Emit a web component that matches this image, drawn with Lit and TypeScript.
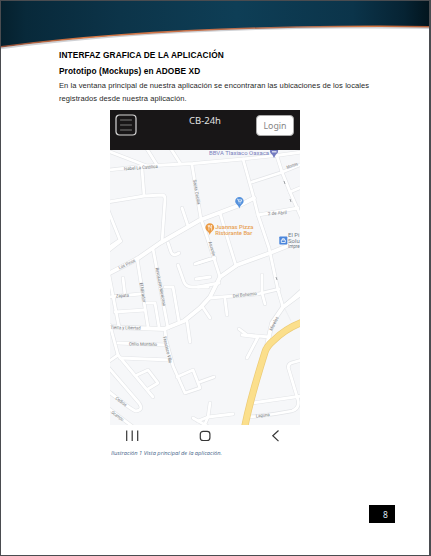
import { LitElement, html, svg, css } from "lit";
import { customElement } from "lit/decorators.js";

const ROADS = [
  "M108 170L145 166L193 163.500L243 159L280 155L302 152",
  "M108 151L147 166", "M147 149L157 165", "M171 149L180 163",
  "M142 169L144 195", "M108 202L144 196L162 195Q165 195 165 199L162 242",
  "M192 165L201 219L209 243L220 277", "M182 208L188 226",
  "M108 210L120 240L108 248", "M168 243L171 252Q173 257 179 253",
  "M243 159L253 195L258 215L269 248L278 290L283 307",
  "M275 150L282 172L290 192L302 219", "M252 182L280 173L302 164", "M290 192L302 187",
  "M258 215L298 208", "M220 213L228 240L236 266",
  "M198 263L215 258", "M198 287L219 283", "M210 298L258 294L279 289",
  "M262 275L262 293L265 304", "M225 299L227 315", "M202 306L210 318",
  "M283 307L302 290", "M239 329L247 335L269 337",
  "M137 258L148 327", "M153 249L168 328", "M165 287L173 287L179 322",
  "M147 303L155 303L159 327", "M123 278L125 295", "M108 297L140 294",
  "M108 270L119 327", "M115 312L145 310", "M178 265L184 282Q186 287 192 287L208 287",
  "M196 279L210 277", "M195 264L210 259", "M108 251L121 241",
  "M165 330L166 340L173 366L185 393L200 388L193 370L177 377",
  "M187 321L190 342",
  "M110 325L118 355L153 397", "M118 343L166 345", "M120 358L170 360", "M108 362L118 355",
  "M137 375L148 370L158 383L148 389", "M108 367L139 403Q144 410 136 411Q133 411 108 391",
  "M108 408L132 426", "M200 382L214 377", "M193 418L207 426",
  "M210 403L208 417L204 426", "M198 421L208 417L233 414",
  "M242 335L258 337L247 358", "M252 403L302 396",
  "M302 360L291 363Q287 365 289 370L298 400Q300 408 292 411Q272 415 249 417",
];
const MAIN = [
  "M108 274L137 259L160 243L200 220L240 205L254 198",
  "M108 327L164 329L184 321L200 308L210 297L220 277L237 265L270 253L290 245",
  "M302 293L283 307L272 323L267 345",
];
const YELLOW = "M244.500 428C249 405 254 387 265 352Q267 346 273 341C282 332 292 326 303 322";

type Label = [string, number, number, number, number];
const LABELS: Label[] = [
  ["Isabel La Católica", 124, 170.3, -4, 34], ["Santa Cecilia", 193, 180, 80, 25],
  ["Montes", 287.3, 169, -20, 11.5], ["2 de Abril", 268, 215.3, -4, 19],
  ["Los Pinos", 119.500, 269.500, -26, 18], ["El Mirador", 139.500, 283, 80, 20],
  ["Revolución Mexicana", 155.500, 268, 79, 39], ["Zapata", 116, 297.5, -4, 13],
  ["Tierra y Libertad", 110.5, 329, 1, 30], ["Otilio Montaño", 129, 345.5, 1, 28],
  ["Francisco Villa", 163, 337, 77, 27], ["Del Bohemio", 233, 297.5, -6, 24],
  ["Morelos", 272, 331, -63, 15], ["Asunción", 208.500, 242, 74, 15],
  ["Laguna", 256, 417.5, -6, 14], ["Cedros", 115, 399, 36, 13], ["Ocampo", 111, 413, 36, 14],
];

@customElement("street-map")
class StreetMap extends LitElement {
  static styles = css`
    :host { display: block; height: 275px; }
    svg { display: block; width: 190px; height: 275px; }
    .edge, .road, .main-edge, .main, .gold-edge, .gold { fill: none; stroke-linejoin: round; stroke-linecap: round; }
    .edge { stroke: #e2e4e7; stroke-width: 4; }
    .main-edge { stroke: #e0e2e5; stroke-width: 5; }
    .road { stroke: #fff; stroke-width: 2.8; }
    .main { stroke: #fff; stroke-width: 3.8; }
    .gold-edge { stroke: #eccb76; stroke-width: 7.2; }
    .gold { stroke: #fbdf8c; stroke-width: 5.8; }
    text { font-family: Roboto, sans-serif; }
    .street { font-size: 4.6px; fill: #76797d; stroke: #f7f8f9; stroke-width: .7px; paint-order: stroke; }
    .blue { fill: #7a82bd; font-size: 6px; }
    .food { fill: #e8a052; font-size: 6px; font-weight: 500; }
    .shop { fill: #737b86; font-size: 6px; }
    .small { font-size: 4.8px; }
  `;
  render() {
    return html`<svg viewBox="110 150 190 275">
      <rect x="110" y="150" width="190" height="275" fill="#f6f7f9"></rect>
      ${ROADS.map((d) => svg`<path class="edge" d=${d}></path>`)}
      ${MAIN.map((d) => svg`<path class="main-edge" d=${d}></path>`)}
      ${ROADS.map((d) => svg`<path class="road" d=${d}></path>`)}
      ${MAIN.map((d) => svg`<path class="main" d=${d}></path>`)}
      <path d="M285 309L291 321" stroke="#e6e8eb" stroke-width=".6"></path>
      <path class="gold-edge" d=${YELLOW}></path>
      <path class="gold" d=${YELLOW}></path>
      ${LABELS.map(([t, x, y, a, w]) => svg`<text class="street" transform="translate(${x} ${y}) rotate(${a})" textLength=${w} lengthAdjust="spacingAndGlyphs">${t}</text>`)}
      <path d="M284 181l1 3M290 199l1 3M276 277l1 3" stroke="#9da0a4" stroke-width="1"></path>
      <text class="blue" x="209" y="155.300" textLength="60" lengthAdjust="spacingAndGlyphs">BBVA Tlaxiaco Oaxaca</text>
      <path d="M270 150h8.200q.3 3-2.500 4.800L274 158l-1.700-3.200Q269.500 153 270 150" fill="#747bc0"></path>
      <path d="M272 151h4.500v1.500H272z" fill="#d5d8ee"></path>
      <path d="M235.200 201.200a4.200 4.200 0 0 1 8.400 0c0 2.900-3.200 3.600-4.200 7.200c-1-3.600-4.200-4.300-4.200-7.200" fill="#5592dd"></path>
      <path d="M237.200 199.200h.8l.7 2.500h2.400l.7-1.800h-3.500" fill="none" stroke="#fff" stroke-width=".7"></path>
      <path d="M238.700 203h.7m1 0h.7" stroke="#fff" stroke-width=".8"></path>
      <path d="M205.400 227.600a4.400 4.400 0 0 1 8.800 0c0 3-3.300 3.700-4.400 7.300c-1.100-3.600-4.400-4.300-4.400-7.300" fill="#eb9a43"></path>
      <path d="M208.200 225v1.700h1.400V225m-.7 0v5.500M211.600 230.500V225q-1 .8-1 3h1" fill="none" stroke="#fff" stroke-width=".6"></path>
      <text class="food" x="215.300" y="228.500" textLength="38" lengthAdjust="spacingAndGlyphs">Juannas Pizza</text>
      <text class="food" x="215.300" y="235" textLength="37" lengthAdjust="spacingAndGlyphs">Ristorante Bar</text>
      <rect x="279.300" y="236.500" width="8" height="8" rx=".7" fill="#4b86dc"></rect>
      <path d="M281.300 240h4v2.500h-4zM282.300 240v-1.300h2v1.300" fill="none" stroke="#fff" stroke-width=".8"></path>
      <text class="shop" x="288" y="237" textLength="11.500" lengthAdjust="spacingAndGlyphs">El Pi</text>
      <text class="shop" x="288" y="243" textLength="11.700" lengthAdjust="spacingAndGlyphs">Solu</text>
      <text class="shop small" x="288" y="248.300" textLength="11.700" lengthAdjust="spacingAndGlyphs">Impre</text>
    </svg>`;
  }
}

@customElement("phone-mockup")
class PhoneMockup extends LitElement {
  static styles = css`
    :host { display: block; width: 190px; }
    .bar { height: 40px; background: #181617; display: grid; grid-template-columns: 1fr auto 1fr; padding: 0 6px 0 5px; box-sizing: border-box; }
    .burger { width: 22px; height: 22px; margin-top: 4px; }
    .title { font: 9.500px/12px "Noto Sans", sans-serif; color: #e2e2e2; margin-top: 5px; width: 31px; white-space: nowrap; }
    .login { justify-self: end; margin-top: 5px; width: 38px; height: 21px; box-sizing: border-box; border: 1px solid #aaa; border-radius: 4px; background: #fff; color: #858585; font: 8.800px/20px "Noto Sans", sans-serif; text-align: center; }
    .nav { height: 20px; }
    .nav svg { display: block; }
  `;
  render() {
    return html`
      <div class="bar">
        <svg class="burger" viewBox="0 0 22 22" fill="none">
          <rect x="1" y="1" width="20" height="20" rx="3.500" stroke="#d6d6d6" stroke-width="1.200"></rect>
          <path d="M5.500 6h11M5.500 11h11M5.500 16h11" stroke="#858585" stroke-width=".9" stroke-linecap="round"></path>
        </svg>
        <div class="title">CB-24h</div>
        <div class="login">Login</div>
      </div>
      <street-map></street-map>
      <div class="nav">
        <svg width="190" height="20" fill="none" stroke="#363636" stroke-width="1.200">
          <path d="M16.700 5.500v10.500M22.200 5.500v10.500M27.700 5.500v10.500"></path>
          <rect x="90.300" y="6.300" width="9.600" height="9.200" rx="2.800"></rect>
          <path d="M168.500 5.500l-5.700 5.300 5.700 5.300"></path>
        </svg>
      </div>`;
  }
}

@customElement("app-root")
class AppRoot extends LitElement {
  static styles = css`
    :host { display: flex; flex-direction: column; width: 431px; height: 556px; box-sizing: border-box; border: 1px solid #4a4c50; border-right-width: 2px; background: #fff; overflow: hidden; }
    .banner { display: block; width: 428px; height: 49px; flex: none; }
    .copy { padding-left: 58px; font: 7.55px/13px "Liberation Sans", Arial, sans-serif; letter-spacing: .07px; color: #1f1f1f; white-space: nowrap; }
    h1, h2, p { margin: 0; }
    .line { display: block; }
    h1, h2 { font-size: 8.300px; color: #000; font-weight: 700; }
    h1 { line-height: 11px; margin-bottom: 5px; letter-spacing: .12px; }
    h2 { line-height: 11px; margin-bottom: 2px; letter-spacing: .09px; }
    .phone { margin: 5px 0 0 109px; }
    .caption { margin: 4px 0 0 110px; }
    .caption svg { display: block; width: 114px; height: 9px; }
    .caption text { font: italic 400 5.900px "Open Sans", sans-serif; fill: #3f5f88; }
    .page { margin: auto 34px 32px auto; width: 26px; height: 18px; box-sizing: border-box; padding-left: 14px; background: #000; color: #dfe8f5; font: 8.500px/20px "Noto Sans", sans-serif; }
  `;
  render() {
    return html`
      <svg class="banner" viewBox="1 1 428 49">
        <defs>
          <linearGradient id="sea"><stop offset="0" stop-color="#05202d"></stop><stop offset=".06" stop-color="#08293a"></stop><stop offset=".28" stop-color="#0c3449"></stop><stop offset=".55" stop-color="#0e3e56"></stop><stop offset=".82" stop-color="#0b344a"></stop><stop offset=".94" stop-color="#062333"></stop><stop offset="1" stop-color="#02141d"></stop></linearGradient>
          <linearGradient id="rim"><stop offset="0" stop-color="#8d4c37"></stop><stop offset=".2" stop-color="#d87843"></stop><stop offset=".48" stop-color="#c46f49"></stop><stop offset=".7" stop-color="#a66950"></stop><stop offset=".85" stop-color="#dd7b43"></stop><stop offset="1" stop-color="#a85733"></stop></linearGradient>
        </defs>
        <path d="M0 48.400C110 34 230 28.200 340 27.700Q390 27.300 430 28" fill="none" stroke="#cfd1d5" stroke-width="1.800"></path>
        <path d="M0 0H430V26.500Q390 25.800 340 26.200C230 27.500 110 33 0 46.800Z" fill="url(#sea)"></path>
        <path d="M0 46.900C110 32.700 230 27.500 340 26.500Q390 26 430 26.700" fill="none" stroke="url(#rim)" stroke-width="1.500"></path>
      </svg>
      <div class="copy">
        <h1>INTERFAZ GRAFICA DE LA APLICACIÓN</h1>
        <h2>Prototipo (Mockups) en ADOBE XD</h2>
        <p><span class="line">En la ventana principal de nuestra aplicación se encontraran las ubicaciones de los locales</span><span class="line">registrados desde nuestra aplicación.</span></p>
      </div>
      <phone-mockup class="phone"></phone-mockup>
      <div class="caption"><svg><text x="0" y="6" textLength="111" lengthAdjust="spacingAndGlyphs">Ilustración 1 Vista principal de la aplicación.</text></svg></div>
      <div class="page">8</div>`;
  }
}
